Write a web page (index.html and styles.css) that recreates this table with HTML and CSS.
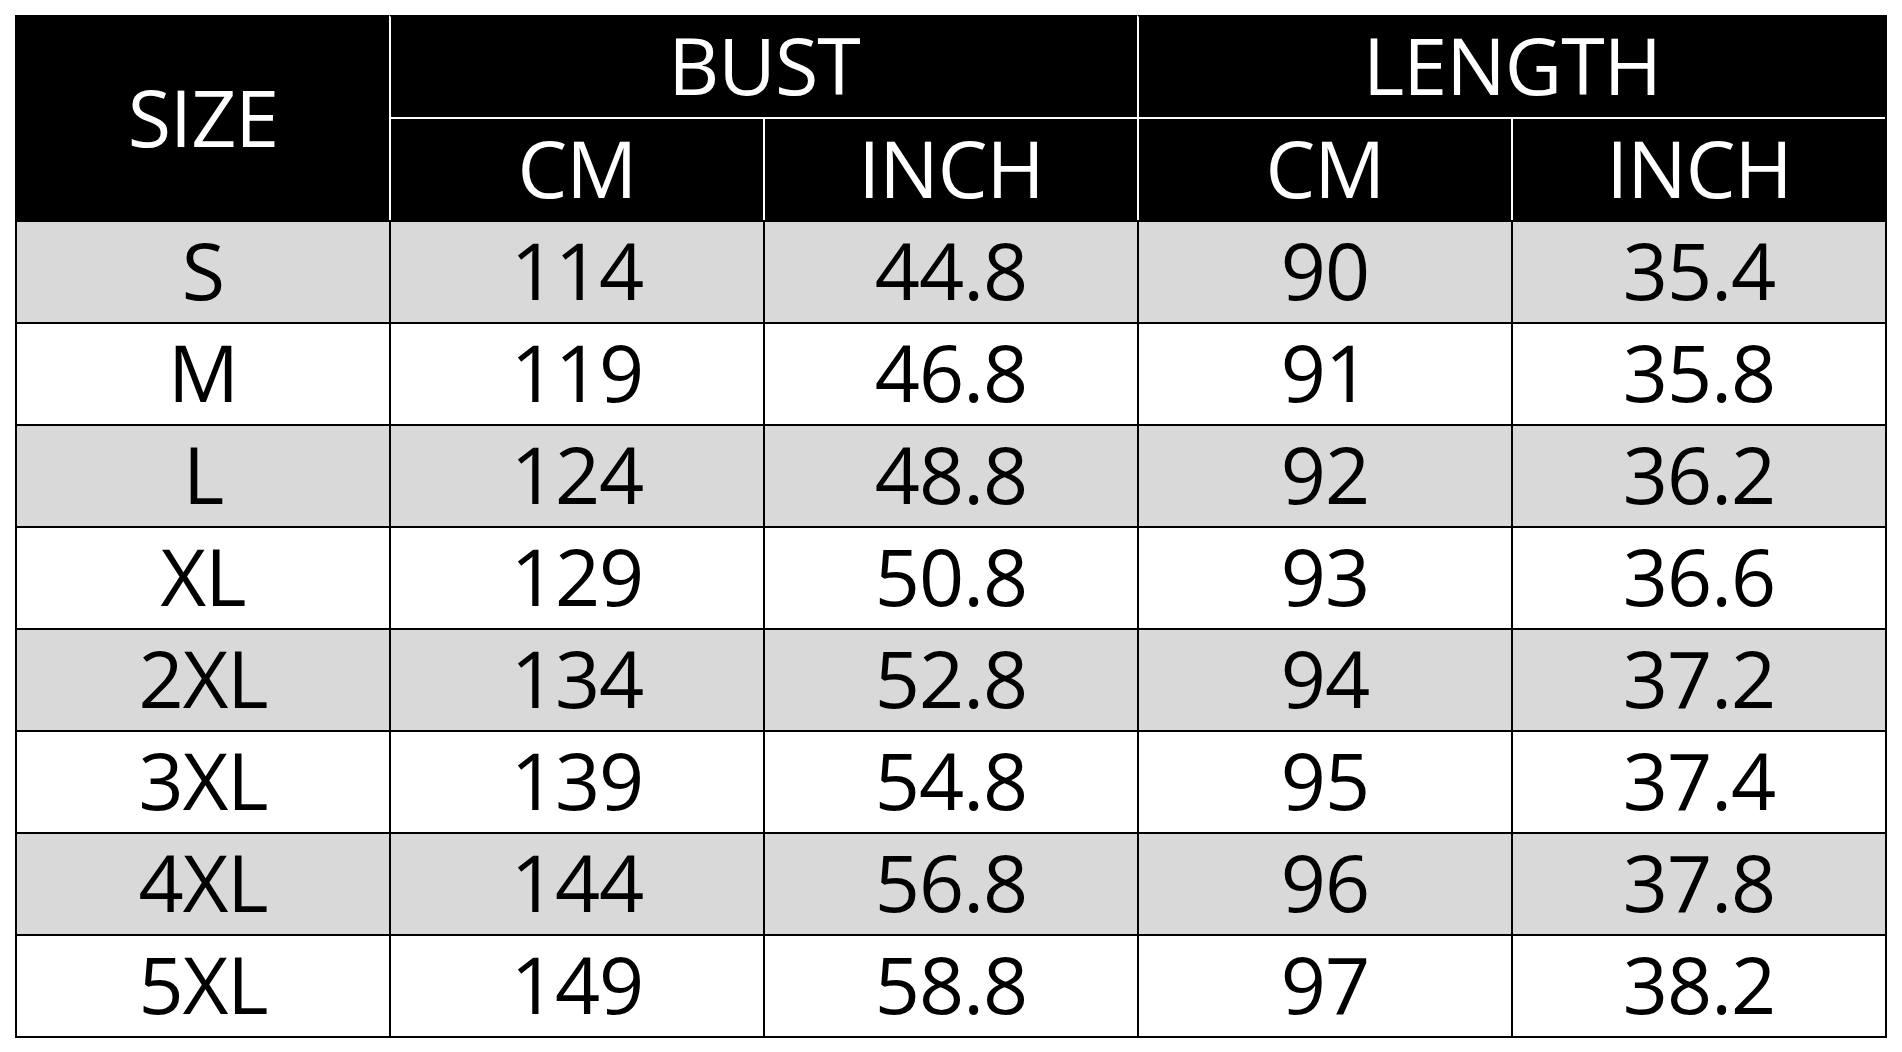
FILE: index.html
```html
<!DOCTYPE html>
<html lang="en">
<head>
<meta charset="utf-8">
<title>Size Chart</title>
<link rel="stylesheet" href="styles.css">
</head>
<body>
<table class="chart">
  <colgroup>
    <col class="col">
    <col class="col">
    <col class="col">
    <col class="col">
    <col class="col">
  </colgroup>
  <thead>
    <tr class="head-top">
      <th class="first" rowspan="2">SIZE</th>
      <th class="group" colspan="2">BUST</th>
      <th class="group" colspan="2">LENGTH</th>
    </tr>
    <tr class="head-sub">
      <th>CM</th>
      <th>INCH</th>
      <th>CM</th>
      <th>INCH</th>
    </tr>
  </thead>
  <tbody>
    <tr class="shade"><td class="first">S</td><td>114</td><td>44.8</td><td>90</td><td>35.4</td></tr>
    <tr><td class="first">M</td><td>119</td><td>46.8</td><td>91</td><td>35.8</td></tr>
    <tr class="shade"><td class="first">L</td><td>124</td><td>48.8</td><td>92</td><td>36.2</td></tr>
    <tr><td class="first">XL</td><td>129</td><td>50.8</td><td>93</td><td>36.6</td></tr>
    <tr class="shade"><td class="first">2XL</td><td>134</td><td>52.8</td><td>94</td><td>37.2</td></tr>
    <tr><td class="first">3XL</td><td>139</td><td>54.8</td><td>95</td><td>37.4</td></tr>
    <tr class="shade"><td class="first">4XL</td><td>144</td><td>56.8</td><td>96</td><td>37.8</td></tr>
    <tr><td class="first">5XL</td><td>149</td><td>58.8</td><td>97</td><td>38.2</td></tr>
  </tbody>
</table>
</body>
</html>
```

FILE: styles.css
```css
html, body {
  margin: 0;
  padding: 0;
  background: #ffffff;
}

body {
  padding: 15px;
  font-family: "Open Sans", "Noto Sans", "DejaVu Sans", sans-serif;
}

.chart {
  border-collapse: separate;
  border-spacing: 0;
  border: 2px solid #000;
  border-top: 0;
  border-left: 0;
  table-layout: fixed;
  width: 1872px;
}

.col {
  width: 374px;
}

.chart th,
.chart td {
  padding: 0 0 5px 0;
  text-align: center;
  vertical-align: middle;
  font-size: 79px;
  font-weight: 400;
  letter-spacing: -1px;
  line-height: 1;
  box-sizing: content-box;
}

.chart th {
  background: #000;
  color: #fff;
  border-left: 2px solid #fff;
}

.chart th.first {
  border-left: 2px solid #000;
  border-top: 2px solid #000;
}

.head-top th {
  height: 95px;
  border-top: 2px solid #000;
}

.head-top th.group {
  border-bottom: 2px solid #fff;
}

.head-sub th {
  height: 96px;
}

.chart td {
  height: 95px;
  color: #000;
  background: #fff;
  border-left: 2px solid #000;
  border-top: 2px solid #000;
}

.chart tr.shade td {
  background: #d9d9d9;
}
```
